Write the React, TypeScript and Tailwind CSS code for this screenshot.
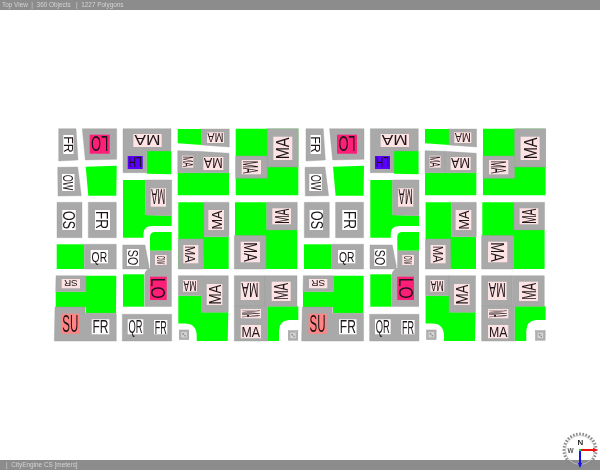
const GREY = "#a9a9a9";
const GREEN = "#00ff00";
const PALE = "#fde3e3";
const WHITE = "#ffffff";
const PINK = "#ff1f78";
const SALMON = "#ff8585";
const BLUE = "#5a00ff";

type Lbl = { r: number[]; t: string; a: number; f: string; len: number; cap: number };

const EM: Record<string, number> = { F: 0.611, R: 0.722, L: 0.556, O: 0.778, W: 0.944, S: 0.667, Q: 0.778, U: 0.722, M: 0.833, A: 0.667, H: 0.722 };

const greens: string[] = [
  "85.7,166.7 116.7,165.7 116.3,195.7 88.3,195.7",
  "56.7,244.3 84.3,244.3 84.3,269 56.7,269",
  "86,275.7 116.3,275.7 116,313.3 85.7,313.3 85.7,307 55.7,307 55.7,291.7 86,291.7",
  "146.7,151 171.3,151 171.3,174.3 146.7,173.7",
  "123,274.3 144.3,274.3 144.3,306.7 123,306.7",
  "177.7,129 201.7,129 201.7,145 177.7,143.3",
  "177.7,172.7 229,172.7 229,195.3 177.7,195.3",
  "235.7,128.7 298.3,128.7 298.3,195.3 235.7,195.3",
  "178.3,202.3 204,202.3 204,239 203.3,269 178.3,269",
  "203.3,236.7 228.7,236.7 228.7,269 203.3,269",
  "235,202.3 266.7,202.3 266.7,236 235,236",
  "266,230 297.3,230 297.3,269 266,269",
];

const greys: string[] = [
  "58.7,128.7 76,128.7 78,160 58.7,161",
  "82.3,128.7 116.7,128.7 116.7,159.3 85.3,160",
  "57.7,167.3 77.7,167 81.3,195.7 58,196",
  "57,202.3 82,202.3 82,237.7 57,237.7",
  "88.3,202.3 116.3,202.3 116.3,237.7 88.3,237.7",
  "84.3,244.3 116.3,244.3 116.3,269 84.3,269",
  "56,275.7 86,275.7 86,291.7 55.7,291.7",
  "55,307 85,307 85,313.3 116.3,313.3 116.3,341 54.3,341",
  "123,128.7 171,128.7 171,151 146.7,151 146.7,172.7 123,172.7",
  "145.3,180 171.7,180 171.7,215.7 145.3,215",
  "122.7,245 145,245 149,266 149,269 122.7,269",
  "122.3,314.3 171.7,314.3 171.7,341 122.3,341",
  "201.7,129 229.3,129 229.3,147 201.7,145",
  "177.7,150.7 197.7,151.3 197.7,172.7 177.7,172.7",
  "197.7,151.3 229,153.3 229,172.7 197.7,172.7",
  "267.3,128.7 298.3,128.7 298.3,167 267.3,167",
  "235.7,156 267.3,156 267.3,178.3 235.7,178.3",
  "178.3,239 203.3,239 203.3,269 178.3,269",
  "204,202.3 229,202.3 229,236.7 204,236.7",
  "266.7,202.3 297.3,202.3 297.3,230 266.7,230",
  "234.3,235.5 266,235.5 266,269 234.3,269",
  "178.3,275.7 201.7,275.7 201.7,295.7 178.3,295.7",
  "201.7,275.7 228.3,275.7 228.3,312.3 201.7,312.3",
  "234.3,275.7 265,275.7 265,306 234.3,306",
  "265,275.7 297,275.7 297,306.3 265,306.3",
  "234.3,306 267.3,306 267.3,321.7 234.3,321.7",
  "234.3,321.7 267.3,321.7 267.3,341 234.3,341",
];

const paths: { d: string; f: string }[] = [
  { d: "M123 180 H145.3 V215 L171.7 215.7 V226 H152 Q144 226 143.5 233 V237.7 H123 Z", f: GREEN },
  { d: "M155 232 H171.7 V250.7 H150 V237 Q150 232 155 232 Z", f: GREEN },
  { d: "M178.3 295.7 H201.7 V312.3 H228.3 L227.7 341 H196.7 V335 Q196 323.5 185 323.5 H178.3 Z", f: GREEN },
  { d: "M267.3 306.3 H298.3 V320 H289 Q279 320.5 279 331 V341 H267.3 Z", f: GREEN },
  { d: "M150 250.7 H171.7 V306.7 H144.5 V275 Q144.5 270 150 268 Z", f: GREY },
];

const labels: Lbl[] = [
  { r: [63.3, 135, 10.2, 19], t: "FR", a: 90, f: WHITE, len: 16.5, cap: 9 },
  { r: [89.7, 134.7, 20, 19], t: "LO", a: 180, f: PINK, len: 17, cap: 16 },
  { r: [62, 174, 12.5, 17], t: "OW", a: 90, f: WHITE, len: 15.5, cap: 10 },
  { r: [62.3, 210, 13.4, 20], t: "OS", a: 90, f: WHITE, len: 18, cap: 11.5 },
  { r: [95, 210, 15, 20], t: "FR", a: 90, f: WHITE, len: 18, cap: 12.5 },
  { r: [90.7, 250, 17.3, 13.3], t: "QR", a: 0, f: WHITE, len: 15.5, cap: 11 },
  { r: [61.7, 279, 18.3, 9.3], t: "SR", a: 180, f: PALE, len: 14, cap: 7 },
  { r: [61.3, 313.7, 18, 20], t: "SU", a: 0, f: SALMON, len: 16, cap: 17 },
  { r: [91.7, 319.3, 17.6, 15], t: "FR", a: 0, f: WHITE, len: 16, cap: 13 },
  { r: [133.3, 134, 28.4, 13], t: "MA", a: 180, f: PALE, len: 26, cap: 10.5 },
  { r: [127.7, 156, 15, 13], t: "LH", a: 180, f: BLUE, len: 13, cap: 11 },
  { r: [150.7, 188.3, 15.3, 18.4], t: "MA", a: 180, f: PALE, len: 14, cap: 16 },
  { r: [127, 249, 12, 17], t: "SO", a: 90, f: WHITE, len: 15.5, cap: 10 },
  { r: [155, 255, 11.7, 10], t: "OW", a: 90, f: PALE, len: 8.5, cap: 8 },
  { r: [150, 276.7, 16.7, 23.3], t: "LO", a: 90, f: PINK, len: 21, cap: 14 },
  { r: [127.7, 319.3, 15.6, 15], t: "QR", a: 0, f: WHITE, len: 14, cap: 13 },
  { r: [154, 320, 13.3, 14.3], t: "FR", a: 0, f: WHITE, len: 12, cap: 13 },
  { r: [207, 132.3, 17, 10.7], t: "MA", a: 180, f: PALE, len: 16, cap: 9 },
  { r: [182.3, 155.7, 11, 12], t: "MA", a: 90, f: PALE, len: 11, cap: 10 },
  { r: [203.3, 157, 20, 13], t: "MA", a: 180, f: PALE, len: 19, cap: 11 },
  { r: [273.3, 136.7, 19, 23.3], t: "MA", a: -90, f: PALE, len: 22, cap: 13 },
  { r: [241.7, 160, 19.3, 14.3], t: "MA", a: 90, f: PALE, len: 13, cap: 16 },
  { r: [183.3, 245, 15, 18.3], t: "MA", a: 90, f: PALE, len: 17, cap: 11 },
  { r: [208.3, 210, 15.7, 20], t: "MA", a: -90, f: PALE, len: 19, cap: 11 },
  { r: [272.3, 208.3, 18.7, 16], t: "MA", a: -90, f: PALE, len: 15, cap: 14 },
  { r: [240.7, 241.7, 19.3, 20.6], t: "MA", a: 90, f: PALE, len: 19.5, cap: 13 },
  { r: [183, 280, 14, 11.7], t: "MA", a: 180, f: PALE, len: 13, cap: 10 },
  { r: [206.7, 284, 15.6, 21], t: "MA", a: -90, f: PALE, len: 20, cap: 12 },
  { r: [240.7, 281.7, 18.6, 18.3], t: "MA", a: 180, f: PALE, len: 17, cap: 15 },
  { r: [271.7, 281.7, 19, 19.3], t: "MA", a: -90, f: PALE, len: 17, cap: 14 },
  { r: [240.7, 309, 20.3, 9.3], t: "MA", a: 90, f: PALE, len: 7.5, cap: 18 },
  { r: [240.7, 325, 20.3, 13.3], t: "MA", a: 0, f: PALE, len: 18.5, cap: 11 },
];

function Tile() {
  return (
    <g>
      {greens.map((p, i) => (
        <polygon key={i} points={p} fill={GREEN} />
      ))}
      {paths.map((p, i) => (
        <path key={i} d={p.d} fill={p.f} />
      ))}
      {greys.map((p, i) => (
        <polygon key={i} points={p} fill={GREY} stroke="#9e9e9e" strokeWidth={0.4} />
      ))}
      {labels.map((l, i) => {
        const [x, y, w, h] = l.r;
        const fs = l.cap / 0.72;
        const natural = l.t.split("").reduce((s, c) => s + EM[c], 0) * fs;
        const sx = l.len / natural;
        return (
          <g key={i}>
            <rect x={x} y={y} width={w} height={h} fill={l.f} />
            <g transform={`translate(${x + w / 2} ${y + h / 2}) rotate(${l.a}) scale(${sx} 1)`}>
              <text
                x={0}
                y={l.cap / 2}
                textAnchor="middle"
                fontSize={fs}
                fontFamily="'Liberation Sans', sans-serif"
                fill="#1c1418"
              >
                {l.t}
              </text>
            </g>
          </g>
        );
      })}
      {[
        [179.3, 330],
        [288.3, 330.7],
      ].map(([x, y], i) => (
        <g key={i}>
          <rect x={x} y={y} width={9.5} height={9.5} fill="#b0b0b0" stroke="#9a9a9a" strokeWidth={0.5} />
          <rect x={x + 2} y={y + 2} width={5.5} height={5.5} fill="#d4d4d4" />
          <rect x={x + 3.2} y={y + 3.2} width={1.6} height={1.6} fill="#8a8a8a" />
          <rect x={x + 5} y={y + 5} width={1.4} height={1.4} fill="#8a8a8a" />
        </g>
      ))}
    </g>
  );
}

function Compass() {
  const ticks = Array.from({ length: 32 }, (_, i) => i);
  return (
    <svg viewBox="0 0 40 40" className="absolute right-[0px] bottom-[0px] w-[40px] h-[40px] blur-[0.3px]">
      {ticks.map((i) => (
        <rect key={i} x="19.2" y="2.5" width="1.6" height="3" fill="#8a8a8a" transform={`rotate(${i * 11.25} 20 20)`} />
      ))}
      <circle cx="20" cy="20" r="14.5" fill="none" stroke="#c4c4c4" strokeWidth="0.8" />
      <text x="20.5" y="14.5" textAnchor="middle" fontSize="8" fontWeight="700" fontFamily="'Liberation Sans', sans-serif" fill="#2e2e2e">N</text>
      <text x="10.5" y="22.5" textAnchor="middle" fontSize="6.5" fontWeight="700" fontFamily="'Liberation Sans', sans-serif" fill="#555555">W</text>
      <line x1="20" y1="20" x2="33" y2="20" stroke="#ee1111" strokeWidth="2" />
      <polygon points="33,17.8 38,20 33,22.2" fill="#ee1111" />
      <line x1="20" y1="20" x2="20" y2="34" stroke="#1111ee" strokeWidth="2" />
      <polygon points="17.8,33 20,38 22.2,33" fill="#1111ee" />
      <circle cx="20" cy="20" r="1.2" fill="#22cc55" />
    </svg>
  );
}

export default function App() {
  return (
    <div className="relative flex flex-col w-[600px] h-[470px] overflow-hidden bg-white font-['Liberation_Sans',sans-serif]">
      <div className="flex items-center h-[10px] pl-[2px] bg-[#8c8c8c] text-[6.4px] leading-[10px] text-[#d4d4d4] whitespace-pre">
        <span className="blur-[0.25px]">Top View  |  360 Objects   |  1227 Polygons</span>
      </div>
      <div className="flex-1 min-h-0">
        <svg viewBox="0 10 600 450" className="block w-[600px] h-[450px] blur-[0.35px]">
          <Tile />
          <g transform="translate(247.3 0)">
            <Tile />
          </g>
        </svg>
      </div>
      <div className="flex items-center h-[10px] pl-[6px] bg-[#8c8c8c] text-[6.4px] leading-[10px] text-[#d4d4d4] whitespace-pre">
        <span className="blur-[0.25px]">|  CityEngine CS [meters]</span>
      </div>
      <Compass />
    </div>
  );
}
